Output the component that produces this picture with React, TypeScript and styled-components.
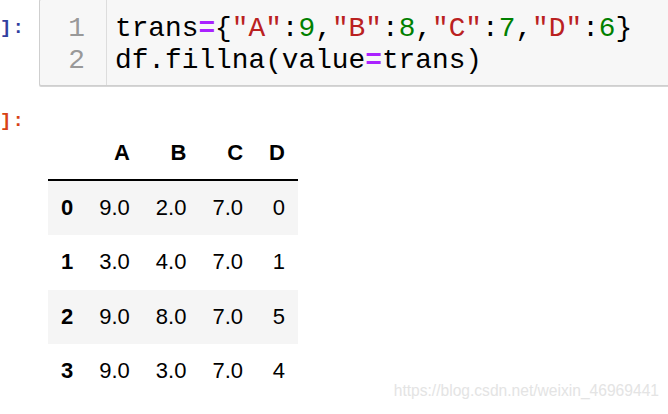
import React from "react";
import styled, { createGlobalStyle } from "styled-components";

const GlobalStyle = createGlobalStyle`
  html, body {
    margin: 0;
    padding: 0;
    background: #ffffff;
    overflow: hidden;
  }
  body {
    width: 668px;
    height: 414px;
    position: relative;
  }
`;

const rows = [
  ["0", "9.0", "2.0", "7.0", "0"],
  ["1", "3.0", "4.0", "7.0", "1"],
  ["2", "9.0", "8.0", "7.0", "5"],
  ["3", "9.0", "3.0", "7.0", "4"],
];

const App = () => {
  return (
    <Page>
      <GlobalStyle />
      <InputRow>
        <Prompt $kind="in">]:</Prompt>
        <CodeCell>
          <Gutter>
            <LineNo>1</LineNo>
            <LineNo>2</LineNo>
          </Gutter>
          <Code>
            <Line>
              trans<Op>=</Op>
              {"{"}
              <Str>"A"</Str>:<Num>9</Num>,<Str>"B"</Str>:<Num>8</Num>,
              <Str>"C"</Str>:<Num>7</Num>,<Str>"D"</Str>:<Num>6</Num>
              {"}"}
            </Line>
            <Line>
              df.fillna(value<Op>=</Op>trans)
            </Line>
          </Code>
        </CodeCell>
      </InputRow>

      <OutputRow>
        <Prompt $kind="out">]:</Prompt>
        <Frame>
          <thead>
            <tr>
              <Th />
              <Th>A</Th>
              <Th>B</Th>
              <Th>C</Th>
              <Th>D</Th>
            </tr>
          </thead>
          <tbody>
            {rows.map((r, i) => (
              <Tr key={r[0]} $odd={i % 2 === 0}>
                <IndexCell>{r[0]}</IndexCell>
                {r.slice(1).map((v, j) => (
                  <Td key={j}>{v}</Td>
                ))}
              </Tr>
            ))}
          </tbody>
        </Frame>
      </OutputRow>

      <Watermark>https://blog.csdn.net/weixin_46969441</Watermark>
    </Page>
  );
};

export default App;

const Page = styled.div`
  width: 668px;
  height: 414px;
  position: relative;
  overflow: hidden;
`;

const InputRow = styled.div`
  display: flex;
  align-items: flex-start;
  margin-top: -1px;
`;

const Prompt = styled.div<{ $kind: "in" | "out" }>`
  width: 26px;
  flex: none;
  white-space: pre;
  font-family: "Liberation Mono", monospace;
  font-size: 19px;
  font-weight: bold;
  letter-spacing: 1px;
  line-height: 32px;
  color: ${(p) => (p.$kind === "in" ? "#303f9f" : "#d84315")};
  margin-top: ${(p) => (p.$kind === "in" ? "13px" : "0px")};
`;

const CodeCell = styled.div`
  margin-left: 13px;
  width: 660px;
  flex: none;
  display: flex;
  background: #f7f7f7;
  border: 1px solid #cfcfcf;
  border-radius: 2px;
  box-shadow: 0 1px 0 #d6d6d6;
  height: 87px;
  box-sizing: border-box;
`;

const Gutter = styled.div`
  width: 67px;
  box-sizing: border-box;
  border-right: 1px solid #dddddd;
  padding: 13px 21px 0 0;
  text-align: right;
`;

const LineNo = styled.div`
  font-family: "Liberation Mono", monospace;
  font-size: 27.8px;
  line-height: 32px;
  color: #999999;
`;

const Code = styled.div`
  padding: 13px 0 0 8px;
`;

const Line = styled.div`
  font-family: "Liberation Mono", monospace;
  font-size: 27.8px;
  line-height: 32px;
  color: #000000;
  white-space: pre;
`;

const Op = styled.span`
  color: #aa22ff;
  font-weight: bold;
`;

const Str = styled.span`
  color: #ba2121;
`;

const Num = styled.span`
  color: #008000;
`;

const OutputRow = styled.div`
  display: flex;
  align-items: flex-start;
  padding-top: 19px;
`;

const Frame = styled.table`
  margin-left: 22px;
  margin-top: 22px;
  border-collapse: collapse;
  border-spacing: 0;
  font-family: "Liberation Sans", Arial, sans-serif;
  font-size: 22px;
  color: #000000;
`;

const Th = styled.th`
  height: 53px;
  padding: 0 13px;
  text-align: right;
  font-weight: bold;
  vertical-align: middle;
  border-bottom: 2px solid #000000;
  box-sizing: border-box;
`;

const Tr = styled.tr<{ $odd: boolean }>`
  background: ${(p) => (p.$odd ? "#f5f5f5" : "#ffffff")};
`;

const Td = styled.td`
  height: 54.3px;
  padding: 0 13px;
  text-align: right;
  vertical-align: middle;
`;

const IndexCell = styled(Td)`
  font-weight: bold;
`;

const Watermark = styled.div`
  position: absolute;
  right: 9px;
  bottom: 14px;
  font-family: "Liberation Sans", Arial, sans-serif;
  font-size: 15.6px;
  color: #e4e4e4;
  white-space: nowrap;
`;
